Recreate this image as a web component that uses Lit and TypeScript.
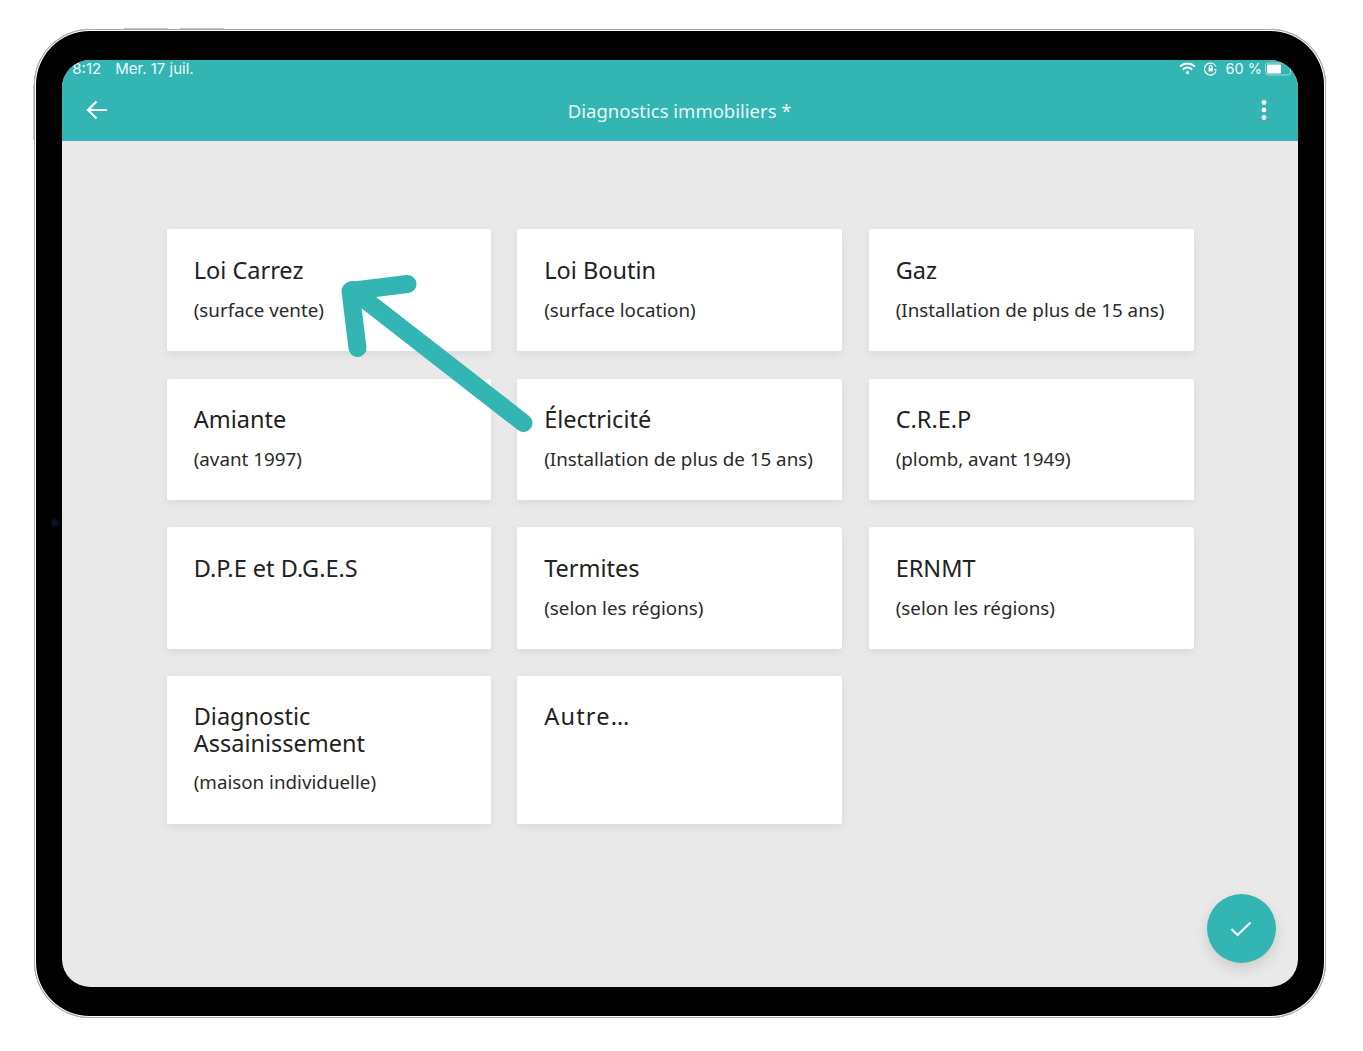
import { LitElement, html, css, svg } from "lit";
import { customElement } from "lit/decorators.js";

interface Item { title: string[]; sub?: string; spaced?: boolean }

const ITEMS: Item[] = [
  { title: ["Loi Carrez"], sub: "(surface vente)" },
  { title: ["Loi Boutin"], sub: "(surface location)" },
  { title: ["Gaz"], sub: "(Installation de plus de 15 ans)" },
  { title: ["Amiante"], sub: "(avant 1997)" },
  { title: ["Électricité"], sub: "(Installation de plus de 15 ans)" },
  { title: ["C.R.E.P"], sub: "(plomb, avant 1949)" },
  { title: ["D.P.E et D.G.E.S"] },
  { title: ["Termites"], sub: "(selon les régions)" },
  { title: ["ERNMT"], sub: "(selon les régions)" },
  { title: ["Diagnostic", "Assainissement"], sub: "(maison individuelle)" },
  { title: ["Autre…"], spaced: true },
];

@customElement("app-root")
export class AppRoot extends LitElement {
  static styles = css`
    :host { display: block; width: 1363px; height: 1051px; background: #fff; overflow: hidden; font-family: "Noto Sans", sans-serif; }
    .page { padding: 29px 0 0 34px; }
    .device {
      position: relative; box-sizing: border-box; width: 1292px; height: 989px;
      background: #000; border-radius: 56px;
      box-shadow: 0 0 0 1px #a9a9a9 inset, 0 0 0 2px #fff inset;
      padding: 31px 28px 31px 28.3px;
    }
    .btn { position: absolute; background: #c4c4c4; }
    .btn.t1 { left: 90px; top: -1px; width: 44px; height: 1px; }
    .btn.t2 { left: 146px; top: -1px; width: 44px; height: 1px; }
    .btn.s { left: -1px; top: 56px; width: 1px; height: 55px; }
    .cam { position: absolute; left: 17px; top: 490px; width: 8px; height: 8px; border-radius: 50%; background: #06121d; }
    .screen {
      position: relative; height: 927px; background: #e9e9e9; border-radius: 28px; overflow: hidden;
      display: flex; flex-direction: column;
    }
    .header { background: #33b5b3; color: #fff; height: 81px; flex: none; display: flex; flex-direction: column; }
    .status {
      height: 17px; display: flex; align-items: center; padding: 0 7px 0 10px;
      font: 15px/17px Inter, "Liberation Sans", sans-serif; color: #eefafa;
    }
    .status .time { margin-right: 14px; }
    .status .spacer { flex: 1; }
    .status svg { display: block; }
    .status .wifi { margin-right: 8px; }
    .status .rot { margin-right: 8px; }
    .status .pct { margin-right: 3px; font-size: 14.5px; }
    .toolbar { flex: 1; display: flex; align-items: center; padding: 2px 31px 0 23.5px; }
    .toolbar .title { flex: 1; text-align: center; font-size: 18.5px; color: #e8f7f6; padding-right: 9.5px; }
    .grid {
      display: grid; grid-template-columns: 324px 325px 325px; column-gap: 26.5px; row-gap: 27.5px;
      grid-template-rows: 122px 121px 121.5px 148px; padding: 88px 0 0 104.4px;
    }
    .card {
      box-sizing: border-box; background: #fff; border-radius: 2px;
      box-shadow: 0 3px 8px rgba(0,0,0,.07);
      padding: 28px 10px 0 27px; color: #222;
    }
    .card:nth-child(n+4):nth-child(-n+6) { padding-top: 27.5px; }
    .card:nth-child(n+10) { padding-top: 27px; }
    .card:nth-child(n+10) .sub { margin-top: 12px; }
    .t { font-size: 23.5px; line-height: 27px; }
    .t.spaced { letter-spacing: 1.2px; }
    .sub { font-size: 18.8px; line-height: 26px; margin-top: 13px; color: #2a2a2a; }
    .arrow { position: absolute; left: 0; top: 0; pointer-events: none; }
    .fab {
      position: absolute; left: 1144.7px; top: 834px; width: 69px; height: 69px; border-radius: 50%;
      background: #33b5b3; box-shadow: 0 6px 14px rgba(0,0,0,.12);
      display: flex; align-items: center; justify-content: center;
    }
  `;

  render() {
    return html`
      <div class="page">
        <div class="device">
          <span class="btn t1"></span><span class="btn t2"></span><span class="btn s"></span>
          <span class="cam"></span>
          <div class="screen">
            <div class="header">
              <div class="status">
                <span class="time">8:12</span><span>Mer. 17 juil.</span>
                <span class="spacer"></span>
                <svg class="wifi" width="17" height="13" viewBox="0 0 17 13" fill="none" stroke="#fff" stroke-width="2">
                  <path d="M1 4.6C5.5 .6 11.5 .6 16 4.6"/><path d="M3.8 7.4c2.8-2.4 6.6-2.4 9.4 0"/><circle cx="8.5" cy="10.6" r="1.6" fill="#fff" stroke="none"/>
                </svg>
                <svg class="rot" width="14" height="14" viewBox="0 0 14 14" fill="none" stroke="#fff" stroke-width="1.2">
                  <path d="M12 9.5A6 6 0 1 1 12 4.6"/><path d="M10 7l3 0-1.5 2z" fill="#fff" stroke="none"/>
                  <rect x="4.6" y="6" width="4.2" height="3.4" fill="#fff" stroke="none"/><path d="M5.4 6V4.8a1.3 1.3 0 0 1 2.6 0V6"/>
                </svg>
                <span class="pct">60 %</span>
                <svg width="26" height="14" viewBox="0 0 26 14"><rect x=".5" y="1" width="25" height="12" rx="2.5" fill="none" stroke="#9fdcdb"/><rect x="2" y="2.5" width="14" height="9" rx="1" fill="#fff"/></svg>
              </div>
              <div class="toolbar">
                <svg width="22" height="20" viewBox="0 0 22 20" fill="none" stroke="#fff" stroke-width="2.2">
                  <path d="M21 10H2"/><path d="M10.5 1.5 2 10l8.5 8.5"/>
                </svg>
                <div class="title">Diagnostics immobiliers *</div>
                <svg width="6" height="20" viewBox="0 0 6 20" fill="#fff">
                  <circle cx="3" cy="2.5" r="2.4"/><circle cx="3" cy="10" r="2.4"/><circle cx="3" cy="17.5" r="2.4"/>
                </svg>
              </div>
            </div>
            <div class="grid">
              ${ITEMS.map(i => html`
                <div class="card">
                  <div class="t ${i.spaced ? "spaced" : ""}">${i.title.map(l => html`<div>${l}</div>`)}</div>
                  ${i.sub ? html`<div class="sub">${i.sub}</div>` : ""}
                </div>`)}
            </div>
            <svg class="arrow" width="1236" height="927" viewBox="0 0 1236 927" fill="none" stroke="#33b5b3" stroke-linecap="round" stroke-linejoin="round">
              ${svg`<g transform="translate(-61.5 -60)">
                <path d="M523 423 352 290" stroke-width="18"/>
                <path d="M407 284 350 291 357 348" stroke-width="18"/>
              </g>`}
            </svg>
            <div class="fab">
              <svg width="22" height="16" viewBox="0 0 22 16" fill="none" stroke="#fff" stroke-width="2">
                <path d="M1.5 8 7.5 14 20.5 1.5"/>
              </svg>
            </div>
          </div>
        </div>
      </div>
    `;
  }
}
